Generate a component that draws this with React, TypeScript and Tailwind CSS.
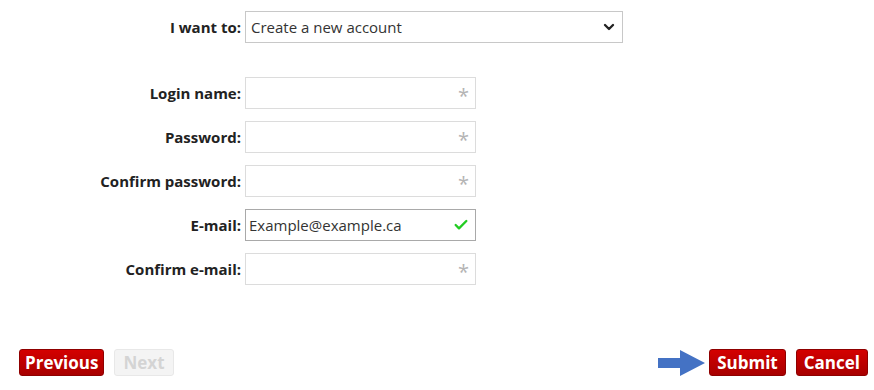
import { ChevronDown, Check } from "lucide-react";

const fields = [
  { label: "Login name:", value: "", ok: false },
  { label: "Password:", value: "", ok: false },
  { label: "Confirm password:", value: "", ok: false },
  { label: "E-mail:", value: "Example@example.ca", ok: true },
  { label: "Confirm e-mail:", value: "", ok: false },
];

function Row({ label, children }: { label: string; children: React.ReactNode }) {
  return (
    <div className="flex items-center gap-[4px]">
      <div className="w-[241px] text-right text-[15px] font-bold text-[#222]">{label}</div>
      {children}
    </div>
  );
}

function RedButton({ children, tight }: { children: React.ReactNode; tight?: boolean }) {
  return (
    <button
      className={`h-[27px] rounded-[3px] border border-[#8f0000] bg-gradient-to-b from-[#d40000] to-[#a80000] text-[17px] font-bold leading-none text-white ${
        tight ? "px-[5px]" : "px-[7px]"
      }`}
    >
      {children}
    </button>
  );
}

export default function App() {
  return (
    <div
      className="flex h-[390px] w-[874px] flex-col bg-white pt-[11px]"
      style={{ fontFamily: '"Open Sans", sans-serif' }}
    >
      <Row label="I want to:">
        <div className="flex h-[32px] w-[378px] items-center justify-between border border-[#c8c8c8] pl-[5px] pr-[5px] text-[15px] text-[#333]">
          <span>Create a new account</span>
          <ChevronDown size={16} strokeWidth={3.5} className="text-[#222]" />
        </div>
      </Row>

      <div className="mt-[34px] flex flex-col gap-[12px]">
        {fields.map((f) => (
          <Row key={f.label} label={f.label}>
            <div
              className={`flex h-[32px] w-[231px] items-center justify-between pl-[3px] pr-[6px] text-[15px] text-[#333] ${
                f.ok ? "border border-[#a9a9a9]" : "border border-[#dcdcdc]"
              }`}
            >
              <span>{f.value}</span>
              {f.ok ? (
                <Check size={16} strokeWidth={3.5} className="text-[#22cc22]" />
              ) : (
                <span className="text-[20px] leading-none text-[#b4b4b4] translate-y-[3px]">*</span>
              )}
            </div>
          </Row>
        ))}
      </div>

      <div className="mt-[64px] flex items-center justify-between pl-[19px] pr-[6px]">
        <div className="flex items-center gap-[10px]">
          <RedButton tight>Previous</RedButton>
          <button className="h-[27px] rounded-[3px] border border-[#e8e8e8] bg-[#f4f4f4] px-[8px] text-[17px] font-bold leading-none text-[#d4d4d4]">
            Next
          </button>
        </div>
        <div className="flex items-center gap-[10px]">
          <svg width="48" height="26" viewBox="0 0 48 26" className="mr-[-7px]">
            <polygon points="0,8 22,8 22,0 47,13 22,26 22,18 0,18" fill="#4472c4" />
          </svg>
          <RedButton>Submit</RedButton>
          <RedButton>Cancel</RedButton>
        </div>
      </div>
    </div>
  );
}
